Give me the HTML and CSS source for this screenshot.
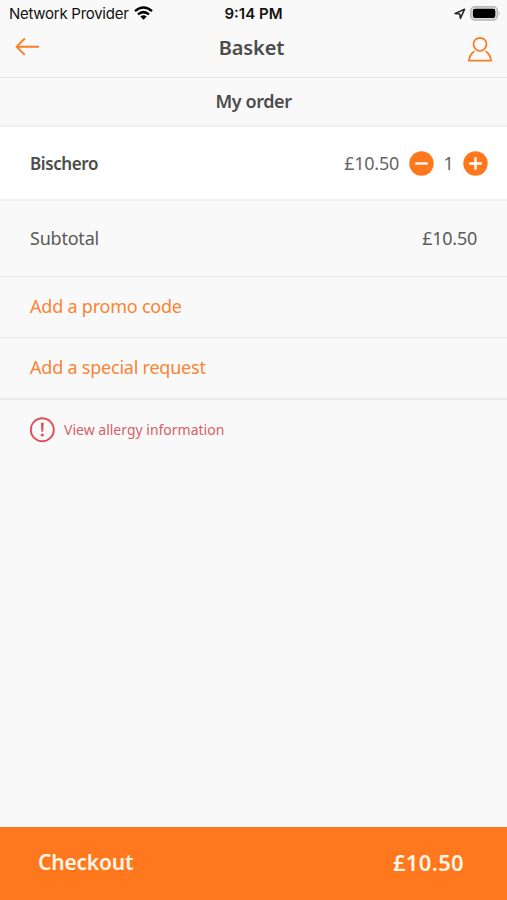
FILE: index.html
```html
<!DOCTYPE html>
<html lang="en">
<head>
<meta charset="utf-8">
<title>Basket</title>
<link rel="stylesheet" href="styles.css">
</head>
<body>
<div class="app">
  <div class="status">
    <div class="carrier"><span class="carrier-name">Network Provider</span>
      <svg class="wifi" width="19" height="14" viewBox="0 0 19 14"><g fill="none" stroke="#000" stroke-width="2.5"><path d="M1 5.1Q9.5-2 18 5.1"/><path d="M4 8.4Q9.5 3.8 15 8.4"/></g><path d="M6.3 10.5Q9.5 8 12.7 10.5L9.5 13.8Z"/></svg>
    </div>
    <span class="time">9:14 PM</span>
    <div class="device">
      <svg width="12" height="12" viewBox="0 0 12 12"><path d="M1 5.6 10.6 1.2 6.4 10.4 5.8 6.1Z" fill="none" stroke="#222" stroke-width="1.5" stroke-linejoin="round"/></svg>
      <svg width="31" height="15" viewBox="0 0 31 15"><rect x=".8" y=".8" width="26.6" height="13.2" rx="4" fill="#ddd" stroke="#b5b5b5" stroke-width="1.4"/><rect x="2.9" y="2.8" width="22.4" height="9.2" rx="2.2"/><path d="M28.7 5.2Q31 7.4 28.7 9.6Z" fill="#b5b5b5"/></svg>
    </div>
  </div>
  <header class="header">
    <svg class="back" width="26" height="20" viewBox="0 0 26 20"><path d="M10.8 1.5 2.6 9.7 10.8 17.9M2.6 9.7H25" fill="none" stroke="#fa7e27" stroke-width="1.9"/></svg>
    <h1 class="title">Basket</h1>
    <svg class="user" width="26" height="27" viewBox="0 0 26 27"><g fill="none" stroke="#fa7e27" stroke-width="1.8"><circle cx="13" cy="8.3" r="6.5"/><path d="M7.4 15.2Q2.8 18 1.9 24.6H24.1Q23.2 18 18.6 15.2"/></g></svg>
  </header>
  <h2 class="order"><span class="order-text">My order</span></h2>
  <div class="row item">
    <span class="name">Bischero</span>
    <div class="quantity">
      <span class="price">£10.50</span>
      <svg class="minus" width="25" height="25" viewBox="0 0 25 25"><circle cx="12.5" cy="12.5" r="12.2" fill="#ff781d"/><path d="M6.3 12.5H18.7" stroke="#fff" stroke-width="2.3"/></svg>
      <span class="count">1</span>
      <svg width="25" height="25" viewBox="0 0 25 25"><circle cx="12.5" cy="12.5" r="12.2" fill="#ff781d"/><path d="M6.3 12.5H18.7M12.5 6.3V18.7" stroke="#fff" stroke-width="2.3"/></svg>
    </div>
  </div>
  <div class="row subtotal"><span class="label">Subtotal</span><span class="price">£10.50</span></div>
  <div class="row promo"><span class="promo-text">Add a promo code</span></div>
  <div class="row request"><span class="request-text">Add a special request</span></div>
  <div class="allergy">
    <svg width="26" height="26" viewBox="0 0 26 26"><circle cx="13.3" cy="12.7" r="11.5" fill="none" stroke="#d95459" stroke-width="1.9"/><path d="M11.9 5.8H14.7L14.2 14.8H12.4Z" fill="#d95459"/><circle cx="13.3" cy="18" r="1.6" fill="#d95459"/></svg>
    <span class="allergy-text">View allergy information</span>
  </div>
  <div class="checkout"><span class="checkout-label">Checkout</span><span class="checkout-total">£10.50</span></div>
</div>
</body>
</html>
```
FILE: styles.css
```css
* { box-sizing: border-box; }
body { margin: 0; background: #f9f9f9; font-family: "Noto Sans", sans-serif; color: #4c4c4c; }
svg { display: block; flex: none; }
.app { height: 900px; display: flex; flex-direction: column; white-space: nowrap; }
.status { height: 27px; display: grid; grid-template-columns: 1fr auto 1fr; align-items: center; padding: 0 6px 0 9px; font-family: Inter, sans-serif; font-size: 15px; color: #111; }
.carrier { display: flex; align-items: center; gap: 5px; }
.carrier-name { letter-spacing: -.27px; }
.wifi { margin-bottom: 2px; }
.time { font-weight: 600; margin-right: 3px; }
.device { display: flex; align-items: center; justify-content: flex-end; gap: 4px; }
.header { height: 51px; display: grid; grid-template-columns: 1fr auto 1fr; align-items: center; padding: 0 14px; border-bottom: 1px solid #e5e5e5; }
.back { margin-bottom: 11px; }
.title { margin: 0 4px 9px 0; font-size: 20px; line-height: 28px; font-weight: 600; letter-spacing: -.15px; }
.user { justify-self: end; margin-bottom: 5px; }
.order { height: 49px; margin: 0; padding-bottom: 2px; display: flex; align-items: center; justify-content: center; font-size: 18px; font-weight: 600; letter-spacing: -.4px; border-bottom: 2px solid #f0f0f0; }
.row { display: flex; align-items: center; justify-content: space-between; padding: 0 30px 2px; font-size: 18px; letter-spacing: -.22px; }
.row.item { height: 74px; padding: 0 19px 0 30px; background: #fff; border-bottom: 2px solid #f0f0f0; }
.name { font-size: 17px; font-weight: 600; letter-spacing: -.4px; }
.price { letter-spacing: -.25px; }
.quantity { display: flex; align-items: center; color: #666; }
.minus { margin-left: 10px; }
.count { width: 29px; text-align: center; }
.subtotal { height: 76px; border-bottom: 1px solid #e5e5e5; color: #5a5a5a; }
.promo { height: 61px; color: #fa8435; border-bottom: 1px solid #e5e5e5; }
.request { height: 62px; color: #fa8435; border-bottom: 2px solid #ececec; }
.allergy { display: flex; align-items: center; height: 60px; padding-left: 29px; gap: 9px; font-size: 14px; color: #d85e67; }
.allergy-text { padding-bottom: 2px; }
.checkout { height: 73px; margin-top: auto; padding: 0 43px 3px 38px; display: flex; align-items: center; justify-content: space-between; background: #ff781d; color: #fff5e6; font-size: 22px; font-weight: 600; }
.checkout-label { font-size: 21px; letter-spacing: -.2px; }
.checkout-total { padding-bottom: 1px; letter-spacing: .35px; }
```
